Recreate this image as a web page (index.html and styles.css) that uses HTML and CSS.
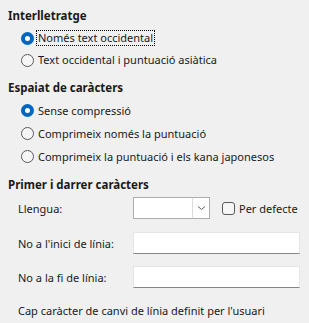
FILE: index.html
```html
<!DOCTYPE html>
<html lang="ca">
<head>
  <meta charset="UTF-8">
  <title>Tipografia asiàtica</title>
  <link rel="stylesheet" href="styles.css">
</head>
<body>

  <div class="group first">
    <div class="heading">Interlletratge</div>
    <div class="options tight">
      <label class="option"><span class="radio checked"></span><span class="text focus">Només text occidental</span></label>
      <label class="option"><span class="radio"></span><span class="text">Text occidental i puntuació asiàtica</span></label>
    </div>
  </div>

  <div class="group">
    <div class="heading">Espaiat de caràcters</div>
    <div class="options">
      <label class="option"><span class="radio checked"></span><span class="text">Sense compressió</span></label>
      <label class="option"><span class="radio"></span><span class="text">Comprimeix només la puntuació</span></label>
      <label class="option"><span class="radio"></span><span class="text">Comprimeix la puntuació i els kana japonesos</span></label>
    </div>
  </div>

  <div class="group">
    <div class="heading">Primer i darrer caràcters</div>
    <div class="field lang">
      <span class="label">Llengua:</span>
      <div class="combo">
        <span class="combo-value"></span>
        <span class="combo-btn">
          <svg width="9" height="6" viewBox="0 0 9 6"><path d="M1 1.5 L4.5 4.5 L8 1.5" fill="none" stroke="#606060" stroke-width="1"/></svg>
        </span>
      </div>
      <label class="check"><span class="box"></span><span>Per defecte</span></label>
    </div>
    <div class="field">
      <span class="label">No a l'inici de línia:</span>
      <div class="entry"></div>
    </div>
    <div class="field second">
      <span class="label">No a la fi de línia:</span>
      <div class="entry"></div>
    </div>
    <p class="note">Cap caràcter de canvi de línia definit per l'usuari</p>
  </div>

</body>
</html>
```

FILE: styles.css
```css
body {
  margin: 0;
  padding: 8px 0 0 8px;
  background: #f0f0f0;
  color: #1a1a1a;
  font-family: 'Noto Sans', 'Open Sans', sans-serif;
  font-size: 11px;
  width: 301px;
}

.heading {
  font-weight: bold;
  font-size: 11.5px;
  line-height: 16px;
  height: 16px;
}

.group {
  margin-top: 9px;
}

.group.first {
  margin-top: 0;
}

.options {
  margin-top: 3px;
}

.option {
  display: flex;
  align-items: center;
  height: 23px;
  padding-left: 13px;
}

.options.tight .option {
  height: 22px;
}

.radio {
  width: 11px;
  height: 11px;
  border: 1px solid #5a5a5a;
  border-radius: 50%;
  background: #f6f6f6;
  flex: none;
  box-sizing: content-box;
}

.radio.checked {
  width: 5px;
  height: 5px;
  border: 4px solid #0067c0;
  background: #fff;
}

.text {
  margin-left: 2px;
  padding: 0 1px;
  line-height: 14px;
  border: 1px solid transparent;
}

.text.focus {
  border: 1px dotted #000;
}

.field {
  display: flex;
  align-items: center;
  margin-top: 13px;
  padding-left: 10px;
  height: 22px;
}

.field.lang {
  margin-top: 4px;
}

.field.second {
  margin-top: 12px;
}

.label {
  width: 115px;
  flex: none;
}

.combo {
  display: flex;
  width: 75px;
  height: 20px;
  border: 1px solid #adadad;
  background: #fff;
}

.combo-value {
  flex: 1;
}

.combo-btn {
  width: 16px;
  border-left: 1px solid #dcdcdc;
  display: flex;
  align-items: center;
  justify-content: center;
}

.check {
  display: flex;
  align-items: center;
  margin-left: 12px;
}

.box {
  width: 11px;
  height: 11px;
  border: 1px solid #5a5a5a;
  border-radius: 3px;
  background: #f6f6f6;
  margin-right: 4px;
}

.entry {
  width: 165px;
  height: 20px;
  background: #fff;
  border: 1px solid #e6e6e6;
  border-bottom: 1px solid #858585;
}

.note {
  margin: 15px 0 0 10px;
  line-height: 16px;
}
```
